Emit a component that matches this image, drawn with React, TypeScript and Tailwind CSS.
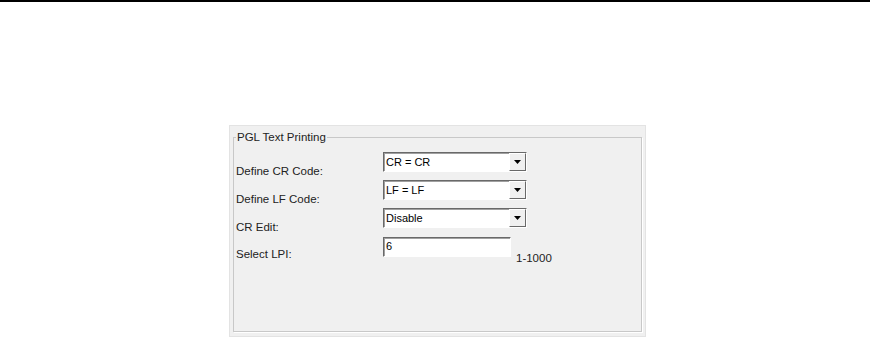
import React from "react";

const font = { fontFamily: '"Liberation Sans", Arial, sans-serif' };

function Combo({ value }: { value: string }) {
  return (
    <div className="flex h-[20px] w-[144px] border border-t-[#696969] border-l-[#696969] border-r-white border-b-white bg-white shadow-[inset_1px_1px_0_#a0a0a0]">
      <div className="flex-1 pl-[2px] text-[11px] leading-[18px] text-black">{value}</div>
      <div className="flex h-[18px] w-[17px] items-center justify-center border border-t-white border-l-white border-r-[#696969] border-b-[#696969] bg-[#f0f0f0]">
        <svg width="7" height="4" viewBox="0 0 7 4">
          <path d="M0 0h7L3.5 4z" fill="#000" />
        </svg>
      </div>
    </div>
  );
}

// label sits lower than the control, as in the old dialog
function Row({ label, children }: { label: string; children: React.ReactNode }) {
  return (
    <div className="flex items-start">
      <div className="h-[20px] w-[147px] pt-[13px] text-[11.5px] leading-[13px] text-[#222]">{label}</div>
      {children}
    </div>
  );
}

export default function App() {
  return (
    <div className="h-[337px] w-[870px] overflow-hidden bg-white" style={font}>
      <div className="h-[2px] w-full bg-black" />
      <div className="ml-[229px] mt-[123px] h-[212px] w-[417px] border border-[#e3e3e3] bg-[#f0f0f0] px-[3px] pt-[5px]">
        <fieldset className="h-[201px] border border-[#c8c8c8] pl-[2px] shadow-[1px_1px_0_#fff]">
          <legend className="px-[1px] text-[11.5px] leading-[13px] text-[#222]">PGL Text Printing</legend>
          <div className="mt-[8px] flex flex-col gap-[8px]">
            <Row label="Define CR Code:">
              <Combo value="CR = CR" />
            </Row>
            <Row label="Define LF Code:">
              <Combo value="LF = LF" />
            </Row>
            <Row label="CR Edit:">
              <Combo value="Disable" />
            </Row>
            <div className="mt-[1px] flex items-start">
              <div className="h-[20px] w-[147px] pt-[11px] text-[11.5px] leading-[13px] text-[#222]">Select LPI:</div>
              <div className="h-[20px] w-[128px] border border-t-[#696969] border-l-[#696969] border-r-white border-b-white bg-white pl-[2px] text-[11px] leading-[16px] text-black shadow-[inset_1px_1px_0_#a0a0a0]">
                6
              </div>
              <div className="ml-[5px] h-[20px] pt-[15px] text-[11.5px] leading-[13px] text-[#222]">1-1000</div>
            </div>
          </div>
        </fieldset>
      </div>
    </div>
  );
}
